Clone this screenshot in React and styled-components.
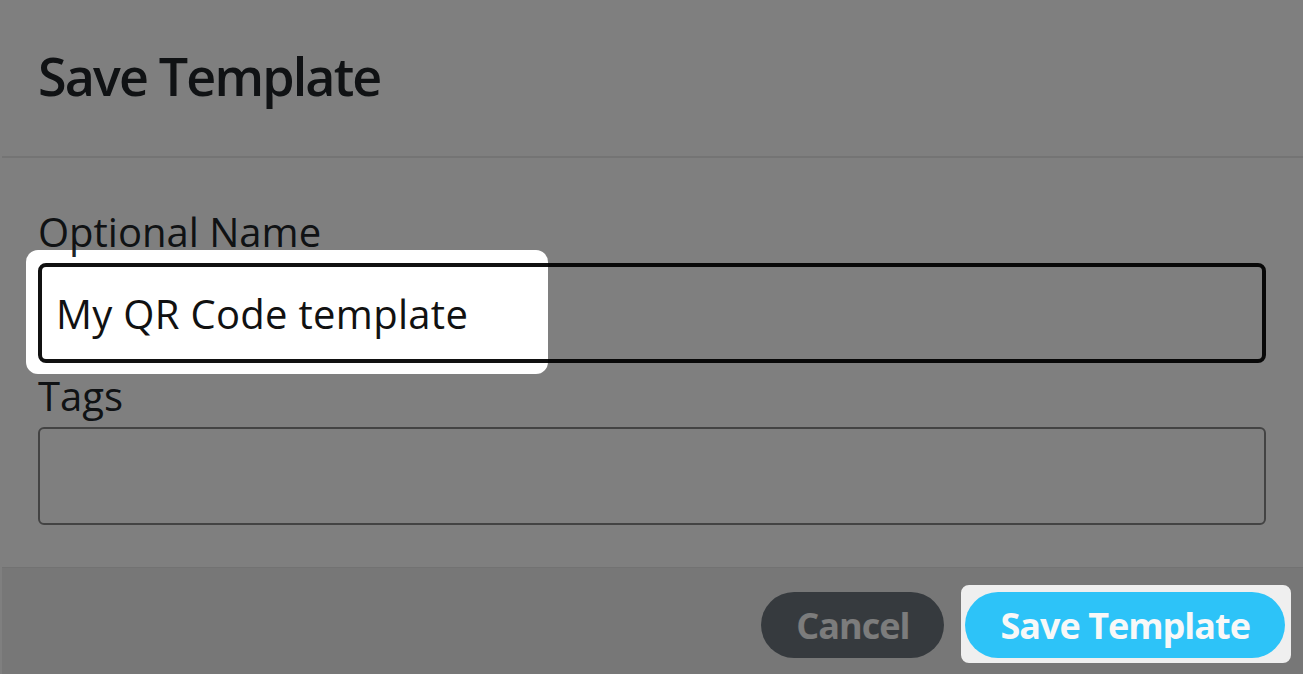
import React from "react";
import styled, { createGlobalStyle } from "styled-components";

const GlobalStyle = createGlobalStyle`
  html, body, #root {
    margin: 0;
    height: 100%;
    overflow: hidden;
    background: #ffffff;
  }
  body {
    font-family: "Open Sans", "Noto Sans", "Liberation Sans", sans-serif;
    color: #212529;
  }
`;

const S = {
  Dialog: styled.div`
    margin-left: 2px;
    height: 100%;
    display: flex;
    flex-direction: column;
    background: #ffffff;
  `,

  Header: styled.div`
    padding: 38px 36px 43px;
    border-bottom: 2px solid #e8e8e8;
  `,

  Title: styled.h5`
    margin: 0;
    font-size: 52px;
    line-height: 75px;
    font-weight: 600;
    letter-spacing: -1.85px;
    color: #212529;
  `,

  Body: styled.div`
    padding: 44px 37px 42px 36px;
    display: flex;
    flex-direction: column;
    gap: 3px;
  `,

  Group: styled.div`
    display: flex;
    flex-direction: column;
    gap: 1px;
  `,

  Label: styled.label`
    font-size: 40px;
    line-height: 60px;
    color: #212529;
  `,

  Input: styled.input`
    box-sizing: border-box;
    width: 100%;
    height: ${(p) => (p.$focused ? 100 : 98)}px;
    padding: 0 14px;
    border: ${(p) => (p.$focused ? "4px solid #111111" : "2px solid #878787")};
    border-radius: ${(p) => (p.$focused ? 8 : 6)}px;
    font-family: inherit;
    font-size: 40px;
    letter-spacing: 0.3px;
    color: #111111;
    background: #ffffff;
    outline: none;
  `,

  Footer: styled.div`
    flex: 1;
    display: flex;
    justify-content: flex-end;
    align-items: flex-start;
    gap: 21px;
    padding: 24px 18px 0 0;
    border-top: 1px solid #e4e4e4;
    background: #efefef;
  `,

  Button: styled.button`
    height: 66px;
    padding: 0 35px;
    border: none;
    border-radius: 33px;
    font-family: inherit;
    font-size: 36px;
    font-weight: 700;
    letter-spacing: -1px;
    color: #f8f8f8;
    background: ${(p) => (p.$primary ? "#2dc3f8" : "#6c757d")};
    cursor: pointer;
  `,

  Overlay: styled.svg`
    position: fixed;
    inset: 0;
    width: 100%;
    height: 100%;
    pointer-events: none;
  `,
};

// tour highlight holes cut out of the backdrop
const holes = [
  { x: 26, y: 250, w: 522, h: 124, r: 12 },
  { x: 961, y: 585, w: 330, h: 78, r: 8 },
];

const roundRect = ({ x, y, w, h, r }) =>
  `M${x + r} ${y}H${x + w - r}A${r} ${r} 0 0 1 ${x + w} ${y + r}` +
  `V${y + h - r}A${r} ${r} 0 0 1 ${x + w - r} ${y + h}` +
  `H${x + r}A${r} ${r} 0 0 1 ${x} ${y + h - r}` +
  `V${y + r}A${r} ${r} 0 0 1 ${x + r} ${y}Z`;

function Spotlight() {
  const d = "M0 0H1303V674H0Z" + holes.map(roundRect).join("");
  return (
    <S.Overlay viewBox="0 0 1303 674" preserveAspectRatio="none">
      <path d={d} fill="rgba(0,0,0,0.5)" fillRule="evenodd" />
    </S.Overlay>
  );
}

export default function App() {
  return (
    <>
      <GlobalStyle />
      <S.Dialog>
        <S.Header>
          <S.Title>Save Template</S.Title>
        </S.Header>
        <S.Body>
          <S.Group>
            <S.Label htmlFor="tpl-name">Optional Name</S.Label>
            <S.Input id="tpl-name" $focused defaultValue="My QR Code template" />
          </S.Group>
          <S.Group>
            <S.Label htmlFor="tpl-tags">Tags</S.Label>
            <S.Input id="tpl-tags" />
          </S.Group>
        </S.Body>
        <S.Footer>
          <S.Button>Cancel</S.Button>
          <S.Button $primary>Save Template</S.Button>
        </S.Footer>
      </S.Dialog>
      <Spotlight />
    </>
  );
}
